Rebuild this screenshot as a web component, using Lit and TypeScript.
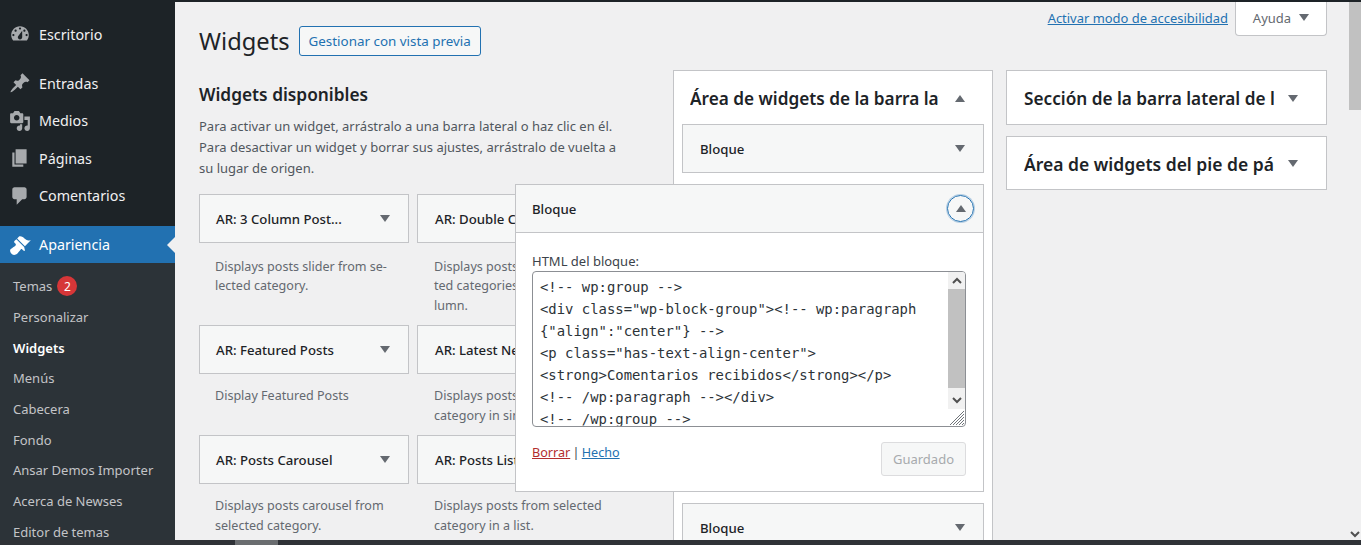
import { LitElement, html, css, svg } from "lit";
import { customElement } from "lit/decorators.js";

const ICONS: Record<string, string> = {
  dash: "M3.76 16h12.48c1.1-1.37 1.76-3.11 1.76-5 0-4.42-3.58-8-8-8s-8 3.58-8 8c0 1.89.66 3.63 1.76 5zM10 4c.55 0 1 .45 1 1s-.45 1-1 1-1-.45-1-1 .45-1 1-1zM6 6c.55 0 1 .45 1 1s-.45 1-1 1-1-.45-1-1 .45-1 1-1zm8 0c.55 0 1 .45 1 1s-.45 1-1 1-1-.45-1-1 .45-1 1-1zm-5.37 5.55L12 7v6c0 1.1-.9 2-2 2s-2-.9-2-2c0-.57.24-1.08.63-1.45zM4 10c.55 0 1 .45 1 1s-.45 1-1 1-1-.45-1-1 .45-1 1-1zm12 0c.55 0 1 .45 1 1s-.45 1-1 1-1-.45-1-1 .45-1 1-1z",
  pin: "M10.44 3.02l1.82-1.82 6.36 6.35-1.83 1.82c-1.05-.68-2.48-.57-3.41.36l-.75.75c-.92.93-1.04 2.35-.35 3.41l-1.83 1.82-2.41-2.41-2.8 2.79c-.42.42-3.38 2.71-3.8 2.29s1.86-3.39 2.28-3.81l2.79-2.79L4.1 9.36l1.83-1.82c1.05.69 2.48.57 3.4-.36l.75-.75c.93-.92 1.05-2.35.36-3.41z",
  media: "M13 11V4c0-.55-.45-1-1-1h-1.67L9 1H5L3.67 3H2c-.55 0-1 .45-1 1v7c0 .55.45 1 1 1h10c.55 0 1-.45 1-1zM7 4.5c1.38 0 2.5 1.12 2.5 2.5S8.38 9.5 7 9.5 4.5 8.38 4.5 7 5.62 4.5 7 4.5zM14 6h5v10.5c0 1.38-1.12 2.5-2.5 2.5S14 17.88 14 16.5s1.12-2.5 2.5-2.5c.17 0 .34.02.5.05V9h-3V6zm-4 8.05V13h2v3.5c0 1.38-1.12 2.5-2.5 2.5S7 17.88 7 16.5 8.12 14 9.5 14c.17 0 .34.02.5.05z",
  page: "M6 15V2h10v13H6zm-1 1h8v2H3V5h2v11z",
  comment: "M5 2h9c1.1 0 2 .9 2 2v7c0 1.1-.9 2-2 2h-2l-5 5v-5H5c-1.1 0-2-.9-2-2V4c0-1.1.9-2 2-2z",
  brush: "M14.48 11.06L7.41 3.99l1.5-1.5c.5-.56 2.3-.47 3.51.32 1.21.8 1.43 1.28 2.91 2.1 1.18.64 2.45 1.26 4.45.85zM13.77 11.77L6.7 4.7 4.93 6.47c-.39.39-.39 1.02 0 1.41l1.06 1.06c.39.39.39 1.03 0 1.42-.6.6-1.43 1.11-2.21 1.69-.35.26-.7.53-1.01.84C1.43 13.23 1 14.29 1 15.3c0 .7.2 1.3.7 1.9l1.1 1.1c.6.5 1.2.7 1.9.7 1.01 0 2.07-.43 3.41-1.77.31-.31.58-.66.84-1.01.58-.78 1.09-1.61 1.69-2.21.39-.39 1.03-.39 1.42 0l1.06 1.06c.39.39 1.02.39 1.41 0z",
};

const MENU = [
  { icon: "dash", label: "Escritorio", cls: "first" },
  { icon: "pin", label: "Entradas", cls: "sep" },
  { icon: "media", label: "Medios", cls: "" },
  { icon: "page", label: "Páginas", cls: "" },
  { icon: "comment", label: "Comentarios", cls: "" },
];

const SUB = ["Personalizar", "Widgets", "Menús", "Cabecera", "Fondo", "Ansar Demos Importer", "Acerca de Newses", "Editor de temas"];

const WIDGETS = [
  { t: "AR: 3 Column Post...", d: "Displays posts slider from se-\nlected category.", r: "r1" },
  { t: "AR: Double Column...", d: "Displays posts from selec-\nted categories in double co-\nlumn.", r: "r1" },
  { t: "AR: Featured Posts", d: "Display Featured Posts", r: "r2" },
  { t: "AR: Latest News", d: "Displays posts from selected\ncategory in single column.", r: "r2" },
  { t: "AR: Posts Carousel", d: "Displays posts carousel from\nselected category.", r: "r3" },
  { t: "AR: Posts List", d: "Displays posts from selected\ncategory in a list.", r: "r3" },
];

const CODE = `<!-- wp:group -->
<div class="wp-block-group"><!-- wp:paragraph
{"align":"center"} -->
<p class="has-text-align-center">
<strong>Comentarios recibidos</strong></p>
<!-- /wp:paragraph --></div>
<!-- /wp:group -->
`;

const down = svg`<svg class="tri" viewBox="0 0 10 7"><path d="M0 0h10L5 7z"/></svg>`;
const up = svg`<svg class="tri" viewBox="0 0 10 7"><path d="M0 7h10L5 0z"/></svg>`;

@customElement("app-root")
export class AppRoot extends LitElement {
  static styles = css`
    :host { display: flex; flex-direction: column; width: 1361px; height: 545px; overflow: hidden; background: #f0f0f1; font-family: "Noto Sans", "Open Sans", sans-serif; font-size: 13px; color: #3c434a; }
    * { box-sizing: border-box; }
    .strip { height: 2px; background: #1d2327; flex: none; }
    .mid { flex: 1; display: flex; min-height: 0; }
    .hbar { flex: none; height: 5px; background: #2f3237; }
    .hbar div { width: 43px; height: 5px; margin-left: 235px; background: #6a6d70; }

    .side { flex: none; width: 175px; background: #1d2327; color: #f0f0f1; overflow: hidden; }
    .item { display: flex; align-items: center; height: 37.5px; font-size: 14.3px; }
    .item.first { margin-top: 13.25px; }
    .item.sep { margin-top: 11.5px; }
    .item svg { width: 22px; height: 22px; margin-left: 9px; margin-right: 8px; fill: #a7aaad; flex: none; }
    .active { position: relative; margin-top: 12px; height: 37px; background: #2271b1; color: #fff; }
    .active svg { fill: #fff; }
    .active::after { content: ""; position: absolute; right: 0; top: 11px; border: 8px solid transparent; border-right-color: #f0f0f1; border-left: 0; }
    .subs { background: #2c3338; padding-top: 7.75px; height: 300px; }
    .sub { display: flex; align-items: center; height: 30.7px; padding-left: 13px; font-size: 13px; color: #c3c4c7; }
    .sub.cur { color: #fff; font-weight: 600; }
    .badge { display: flex; align-items: center; justify-content: center; width: 20px; height: 20px; margin-left: 5px; border-radius: 50%; background: #d63638; color: #fff; font-size: 12px; }

    .main { flex: 1; min-width: 0; display: flex; flex-direction: column; overflow: hidden; padding: 0 22px 0 24px; }
    .top { flex: none; height: 68px; display: flex; align-items: flex-start; justify-content: space-between; }
    .heading { display: flex; align-items: center; gap: 9px; padding-top: 24px; }
    h1 { margin: 0; font-size: 23.7px; line-height: 30px; font-weight: 400; color: #1d2327; }
    .preview { display: flex; align-items: center; height: 30px; padding: 0 9px; border: 1px solid #2271b1; border-radius: 3px; background: #f6f7f7; color: #2271b1; font-size: 13.4px; }
    .meta { display: flex; align-items: flex-start; gap: 7px; }
    .meta a { margin-top: 7px; font-size: 12.95px; line-height: 18px; color: #2271b1; text-decoration: underline; }
    .help { display: flex; align-items: center; justify-content: center; gap: 8px; width: 92px; height: 34px; padding-bottom: 2px; background: #fff; border: 1px solid #c3c4c7; border-top: 0; border-radius: 0 0 4px 4px; color: #646970; font-size: 13px; }
    .help .tri { fill: #646970; }

    .content { flex: 1; min-height: 0; display: flex; align-items: flex-start; }
    .avail { flex: none; width: 474px; padding-top: 13px; }
    h2 { margin: 0; font-size: 17.3px; line-height: 24px; font-weight: 600; color: #1d2327; }
    .intro { margin: 9px 0 0; width: 426px; font-size: 13px; line-height: 21px; color: #50575e; }
    .grid { display: grid; grid-template-columns: 210px 210px; column-gap: 8px; margin-top: 15px; }
    .r1 { height: 131px; } .r2 { height: 110px; } .r3 { height: 110px; }
    .r1 .desc { padding-top: 13.5px; }
    .grid > :nth-child(even) .card { padding-left: 17px; }
    .grid > :nth-child(even) .desc { padding-left: 17px; }
    .card { display: flex; align-items: center; justify-content: space-between; height: 49px; padding: 0 18px 0 16px; background: #f6f7f7; border: 1px solid #c3c4c7; font-size: 13.2px; font-weight: 500; color: #1d2327; white-space: nowrap; overflow: hidden; }
    .card .tri { fill: #646970; flex: none; }
    .desc { margin: 0; padding: 12px 16px 0; font-size: 12.55px; line-height: 19.5px; color: #646970; white-space: pre-line; }

    .tri { width: 10px; height: 7px; flex: none; }
    .area { flex: none; width: 320px; background: #fff; border: 1px solid #c3c4c7; padding: 0 8px; }
    .areaHead { display: flex; align-items: center; height: 53px; padding: 1px 19px 0 8px; gap: 16px; }
    .areaHead span { flex: 1; min-width: 0; font-size: 17.2px; font-weight: 600; color: #1d2327; white-space: nowrap; overflow: hidden; }
    .areaHead .tri { fill: #646970; }
    .stack { margin-left: 13px; flex: none; width: 321px; display: flex; flex-direction: column; gap: 11px; }
    .stack .area { width: 321px; padding: 0 9px; }
    .stack .areaHead { height: 53px; padding-right: 20px; gap: 14px; }
    .stack .areaHead span { flex: none; width: 250px; }
    .stack .area + .area .areaHead { height: 52px; }
    .stack .area + .area .areaHead span { font-size: 17.5px; }

    .area .card { padding: 0 18px 0 17px; }
    .bloque { margin-bottom: 11px; }
    .bloque.after { margin-top: 11px; }
    .open { position: relative; z-index: 2; margin-left: -167px; height: 308px; background: #fff; border: 1px solid #c3c4c7; }
    .openHead { display: flex; align-items: center; justify-content: space-between; height: 48px; padding: 0 9px 0 16px; background: #f6f7f7; border-bottom: 1px solid #c3c4c7; font-size: 13.2px; font-weight: 500; color: #1d2327; }
    .ring { display: flex; align-items: center; justify-content: center; width: 27px; height: 27px; border-radius: 50%; border: 1.5px solid #2271b1; box-shadow: 0 0 0 1px #b6cfe4; }
    .ring .tri { fill: #646970; }
    .body { padding: 19px 17px 0 16px; }
    .lbl { font-size: 13px; line-height: 18px; color: #3c434a; }
    .ta { position: relative; display: flex; height: 156px; margin-top: 1px; border: 1px solid #8c8f94; border-radius: 4px; background: #fff; overflow: hidden; }
    pre { flex: 1; margin: 0; padding: 4px 7px; font-family: "DejaVu Sans Mono", monospace; font-size: 13.9px; line-height: 22px; color: #2c3338; overflow: hidden; }
    .bar { flex: none; width: 17px; display: flex; flex-direction: column; background: #f1f1f1; height: 137px; }
    .bar .btn { flex: none; height: 17px; display: flex; align-items: center; justify-content: center; }
    .bar .btn svg { width: 10px; height: 7px; fill: none; stroke: #505050; stroke-width: 2; }
    .bar .thumb { flex: none; height: 99px; background: #c1c1c1; }
    .bar .rest { flex: 1; }
    .grip { position: absolute; right: 0; bottom: 0; width: 16px; height: 16px; stroke: #70757a; stroke-width: 1; }
    .actions { display: flex; justify-content: space-between; align-items: flex-start; margin-top: 15px; }
    .links { margin-top: 1px; font-size: 12.6px; line-height: 20px; word-spacing: -1px; color: #3c434a; }
    .links a { text-decoration: underline; color: #2271b1; }
    .links a.del { color: #b32d2e; }
    .save { display: flex; align-items: center; justify-content: center; width: 85px; height: 34px; border: 1px solid #dcdcde; border-radius: 3px; background: #f6f7f7; color: #a7aaad; font-size: 13px; }

    .vbar { flex: none; width: 12px; background: #f0f0f1; display: flex; flex-direction: column; justify-content: space-between; }
    .vbar .thumb { height: 108px; background: #c1c1c1; }
    .vbar svg { display: block; width: 10px; height: 7px; margin: 0 0 2px 1px; fill: none; stroke: #505050; stroke-width: 2; }
  `;

  private menuIcon(name: string) {
    return html`<svg viewBox="0 0 20 20"><path d=${ICONS[name]}></path></svg>`;
  }

  private chevron(dir: "up" | "down") {
    return html`<svg viewBox="0 0 10 7"><path d=${dir === "up" ? "M1 6l4-4 4 4" : "M1 1l4 4 4-4"}></path></svg>`;
  }

  render() {
    return html`
      <div class="strip"></div>
      <div class="mid">
        <nav class="side">
          ${MENU.map((m) => html`<div class="item ${m.cls}">${this.menuIcon(m.icon)}${m.label}</div>`)}
          <div class="item active">${this.menuIcon("brush")}Apariencia</div>
          <div class="subs">
            <div class="sub">Temas<span class="badge">2</span></div>
            ${SUB.map((s) => html`<div class="sub ${s === "Widgets" ? "cur" : ""}">${s}</div>`)}
          </div>
        </nav>
        <main class="main">
          <div class="top">
            <div class="heading">
              <h1>Widgets</h1>
              <div class="preview">Gestionar con vista previa</div>
            </div>
            <div class="meta">
              <a>Activar modo de accesibilidad</a>
              <div class="help">Ayuda ${down}</div>
            </div>
          </div>
          <div class="content">
            <section class="avail">
              <h2>Widgets disponibles</h2>
              <p class="intro">Para activar un widget, arrástralo a una barra lateral o haz clic en él. Para desactivar un widget y borrar sus ajustes, arrástralo de vuelta a su lugar de origen.</p>
              <div class="grid">
                ${WIDGETS.map((w) => html`<div class=${w.r}>
                  <div class="card"><span>${w.t}</span>${down}</div>
                  <p class="desc">${w.d}</p>
                </div>`)}
              </div>
            </section>
            <section class="area">
              <div class="areaHead"><span>Área de widgets de la barra lateral</span>${up}</div>
              <div class="card bloque"><span>Bloque</span>${down}</div>
              <div class="open">
                <div class="openHead"><span>Bloque</span><div class="ring">${up}</div></div>
                <div class="body">
                  <div class="lbl">HTML del bloque:</div>
                  <div class="ta">
                    <pre>${CODE}</pre>
                    <div class="bar">
                      <div class="btn">${this.chevron("up")}</div>
                      <div class="thumb"></div>
                      <div class="rest"></div>
                      <div class="btn">${this.chevron("down")}</div>
                    </div>
                    <svg class="grip" viewBox="0 0 16 16"><path d="M1 15L15 1M4 15L15 4M7 15l8-8M10 15l5-5M13 15l2-2"></path></svg>
                  </div>
                  <div class="actions">
                    <div class="links"><a class="del">Borrar</a> | <a>Hecho</a></div>
                    <div class="save">Guardado</div>
                  </div>
                </div>
              </div>
              <div class="card bloque after"><span>Bloque</span>${down}</div>
            </section>
            <div class="stack">
              <section class="area"><div class="areaHead"><span>Sección de la barra lateral de la página</span>${down}</div></section>
              <section class="area"><div class="areaHead"><span>Área de widgets del pie de página</span>${down}</div></section>
            </div>
          </div>
        </main>
        <div class="vbar">
          <div class="thumb"></div>
          ${this.chevron("down")}
        </div>
      </div>
      <div class="hbar"><div></div></div>
    `;
  }
}
